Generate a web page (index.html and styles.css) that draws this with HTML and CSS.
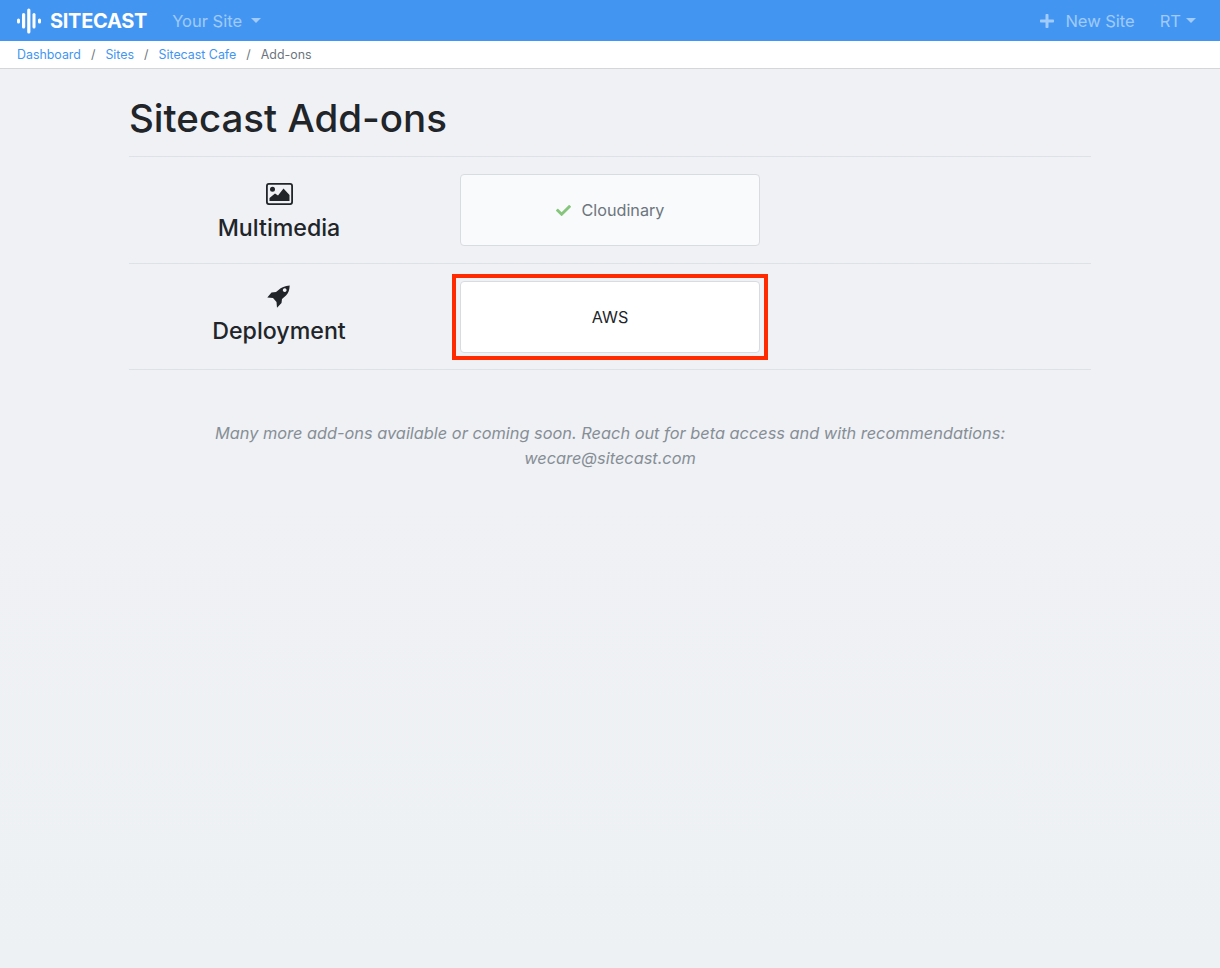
FILE: index.html
```html
<!DOCTYPE html>
<html lang="en">
<head>
    <meta charset="UTF-8">
    <title>Sitecast Add-ons</title>
    <link rel="stylesheet" href="styles.css">
</head>
<body>
    <nav class="navbar">
        <a class="brand" href="#">
            <svg class="brand-icon" viewBox="0 0 25 26" width="25" height="26" fill="#fff">
                <rect x="1" y="10.5" width="3" height="5" rx="1.5"/>
                <rect x="6" y="5" width="3.2" height="15.5" rx="1.6"/>
                <rect x="11.2" y="0.5" width="3.2" height="25" rx="1.6"/>
                <rect x="16.5" y="5" width="3" height="15.5" rx="1.5"/>
                <rect x="22" y="10.5" width="3" height="5" rx="1.5"/>
            </svg>
            <span>SITECAST</span>
        </a>
        <a class="nav-link site-menu" href="#">Your Site <i class="caret"></i></a>
        <div class="nav-right">
            <a class="nav-link" href="#">
                <svg class="plus-icon" viewBox="0 0 448 512" width="14" height="16"><path d="M416 208H272V64c0-17.67-14.33-32-32-32h-32c-17.67 0-32 14.33-32 32v144H32c-17.67 0-32 14.33-32 32v32c0 17.67 14.33 32 32 32h144v144c0 17.67 14.33 32 32 32h32c17.67 0 32-14.33 32-32V304h144c17.67 0 32-14.33 32-32v-32c0-17.67-14.33-32-32-32z"/></svg>
                New Site
            </a>
            <a class="nav-link user-menu" href="#">RT<i class="caret"></i></a>
        </div>
    </nav>

    <ol class="breadcrumb">
        <li><a href="#">Dashboard</a></li>
        <li><a href="#">Sites</a></li>
        <li><a href="#">Sitecast Cafe</a></li>
        <li class="active">Add-ons</li>
    </ol>

    <main class="container">
        <h1>Sitecast Add-ons</h1>

        <section class="addon-row">
            <div class="addon-label">
                <svg class="icon-image" viewBox="0 0 27 22" width="27" height="22">
                    <rect class="frame" x="0.9" y="0.9" width="25.2" height="20.2" rx="2"/>
                    <circle cx="6.5" cy="6.2" r="2.5"/>
                    <path d="M3.5 18V15L9 10.5 12 12.5 17.5 5.5 23.5 12V18Z"/>
                </svg>
                <h4>Multimedia</h4>
            </div>
            <a class="addon-card enabled" href="#">
                <svg viewBox="0 0 512 512" width="15" height="15"><path d="M173.898 439.404l-166.4-166.4c-9.997-9.997-9.997-26.206 0-36.204l36.203-36.204c9.997-9.998 26.207-9.998 36.204 0L192 312.69 432.095 72.596c9.997-9.997 26.207-9.997 36.204 0l36.203 36.204c9.997 9.997 9.997 26.206 0 36.204l-294.4 294.401c-9.998 9.997-26.207 9.997-36.204-.001z"/></svg>
                Cloudinary
            </a>
        </section>

        <section class="addon-row second">
            <div class="addon-label">
                <svg class="icon-rocket" viewBox="0 0 24 24" width="24" height="24"><path fill-rule="evenodd" d="M22.7 1.5C18 2 14 3.5 11.5 6L9 8 4.5 8.5 .3 13.5 6 14 9.5 18 10 23.7 14.5 19 15 15 19 11.5C21.5 9 22.5 6 22.7 1.5ZM17.7 4.2a1.9 1.9 0 1 0 .01 0Z"/></svg>
                <h4>Deployment</h4>
            </div>
            <a class="addon-card highlighted" href="#">AWS</a>
        </section>

        <p class="note">Many more add-ons available or coming soon. Reach out for beta access and with recommendations: wecare@sitecast.com</p>
    </main>
</body>
</html>
```

FILE: styles.css
```css
* {
    margin: 0;
    padding: 0;
    box-sizing: border-box;
}

html {
    height: 100%;
}

body {
    min-height: 100%;
    font-family: Inter, 'Noto Sans', sans-serif;
    font-size: 16px;
    color: #212529;
    background: linear-gradient(#f0f1f5, #eef1f4);
}

a {
    text-decoration: none;
}

.navbar {
    display: flex;
    align-items: center;
    height: 41px;
    padding: 0 24px 0 16px;
    background: #4296f2;
}

.brand {
    display: flex;
    align-items: center;
    color: #fff;
    font-size: 20px;
    font-weight: 700;
    letter-spacing: -0.3px;
}

.brand-icon {
    margin-right: 9px;
}

.nav-link {
    color: rgba(255, 255, 255, 0.5);
    font-size: 16.5px;
    display: flex;
    align-items: center;
}

.site-menu {
    margin-left: 25px;
}

.caret {
    display: inline-block;
    margin-left: 9px;
    border-top: 5px solid rgba(255, 255, 255, 0.5);
    border-left: 5px solid transparent;
    border-right: 5px solid transparent;
}

.nav-right {
    display: flex;
    align-items: center;
    margin-left: auto;
}

.plus-icon {
    fill: rgba(255, 255, 255, 0.5);
    margin-right: 11px;
}

.user-menu {
    margin-left: 25px;
}

.user-menu .caret {
    margin-left: 5px;
}

.breadcrumb {
    display: flex;
    list-style: none;
    height: 28px;
    align-items: center;
    padding: 0 17px;
    font-size: 12.4px;
    background: #fff;
    border-bottom: 1px solid #d5d6d8;
}

.breadcrumb li + li::before {
    content: "/";
    color: #6c757d;
    padding: 0 10px;
}

.breadcrumb a {
    color: #4296f2;
}

.breadcrumb .active {
    color: #6c757d;
}

.container {
    width: 962px;
    margin: 0 auto;
}

h1 {
    font-size: 38.5px;
    font-weight: 500;
    line-height: 48px;
    padding: 25px 0 14px;
    border-bottom: 1px solid #dee2e6;
}

.addon-row {
    display: flex;
    align-items: center;
    height: 107px;
    border-bottom: 1px solid #dee2e6;
}

.addon-row.second {
    height: 106px;
}

.addon-label {
    align-self: flex-start;
    width: 300px;
    text-align: center;
}

.addon-label svg {
    display: block;
    fill: #212529;
}

.icon-image {
    margin: 26px auto 10px;
}

.icon-image .frame {
    fill: none;
    stroke: #212529;
    stroke-width: 1.8;
}

.icon-rocket {
    margin: 20px auto 10px;
}

h4 {
    font-size: 23.2px;
    font-weight: 500;
    line-height: 27px;
}

.addon-card {
    position: relative;
    display: flex;
    align-items: center;
    justify-content: center;
    width: 300px;
    height: 72px;
    margin-left: 31px;
    border: 1px solid #d8dbe0;
    border-radius: 4px;
    font-size: 16.2px;
    color: #212529;
    background: #fff;
}

.addon-card.enabled {
    color: #6c757d;
    background: #f9fafc;
}

.addon-card.enabled svg {
    fill: #86c67c;
    margin-right: 11px;
}

/* red annotation box drawn over the AWS card */
.addon-card.highlighted::after {
    content: "";
    position: absolute;
    box-sizing: border-box;
    top: -8px;
    left: -9px;
    width: 316px;
    height: 86px;
    border: 4px solid #ff2a00;
}

.note {
    width: 820px;
    margin: 51px auto 0;
    text-align: center;
    font-size: 16.35px;
    font-style: italic;
    line-height: 25px;
    color: #868e96;
}
```
